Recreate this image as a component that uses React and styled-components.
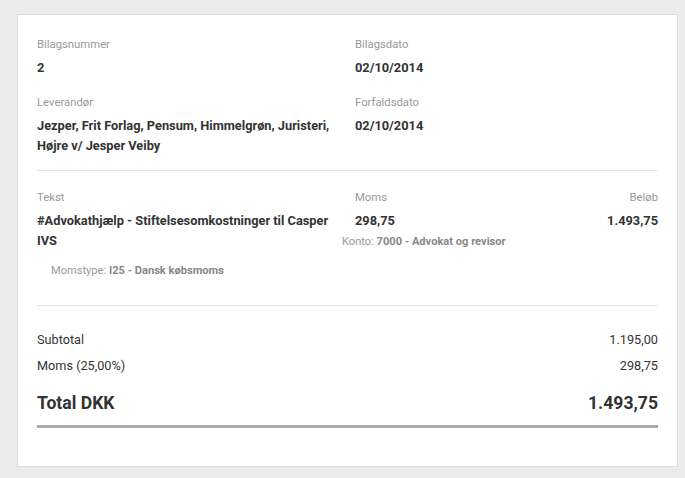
import React from "react";
import styled, { createGlobalStyle } from "styled-components";

const GlobalStyle = createGlobalStyle`
	body {
		margin: 0;
		background: #ececec;
		font-family: Roboto, "Liberation Sans", sans-serif;
		color: #333;
	}
`;

const Card = styled.div`
	box-sizing: border-box;
	width: 661px;
	height: 453px;
	margin: 14px 0 0 17px;
	padding: 22px 19px 0 19px;
	background: #fff;
	border: 1px solid #dcdcdc;
`;

const Grid = styled.div`
	display: grid;
	grid-template-columns: 304px 1fr;
	column-gap: 14px;
`;

const Field = styled.div`
	margin-top: ${(p) => p.$top || 0}px;
`;

const Label = styled.div`
	font-size: 11.3px;
	line-height: 16px;
	color: #999;
	text-align: ${(p) => (p.$right ? "right" : "left")};
`;

const Value = styled.div`
	font-size: 12.8px;
	line-height: 20px;
	font-weight: 700;
	color: #333;
	margin-top: 5px;
	text-align: ${(p) => (p.$right ? "right" : "left")};
`;

const Divider = styled.hr`
	border: 0;
	border-top: 1px solid #e6e6e6;
	margin: ${(p) => p.$top}px 0 0 0;
`;

const LineRow = styled.div`
	display: grid;
	grid-template-columns: 304px 1fr 1fr;
	column-gap: 14px;
	margin-top: 19px;
`;

const Meta = styled.div`
	font-size: 11.1px;
	line-height: 16px;
	color: #999;
	white-space: nowrap;
	margin-top: ${(p) => p.$top || 0}px;
	margin-left: ${(p) => p.$left || 0}px;

	b {
		color: #888;
		font-weight: 700;
	}
`;

const Totals = styled.div`
	margin-top: 24px;
`;

const TotalRow = styled.div`
	display: flex;
	justify-content: space-between;
	font-size: ${(p) => (p.$big ? 17.6 : 12.7)}px;
	line-height: ${(p) => (p.$big ? 24 : 20)}px;
	font-weight: ${(p) => (p.$big ? 700 : 400)};
	color: #333;
	margin-top: ${(p) => p.$top || 0}px;
`;

const TotalBar = styled.div`
	height: 3px;
	background: #aaa;
	margin-top: 10px;
`;

export default function App() {
	return (
		<>
			<GlobalStyle />
			<Card>
				<Grid>
					<Field>
						<Label>Bilagsnummer</Label>
						<Value>2</Value>
					</Field>
					<Field>
						<Label>Bilagsdato</Label>
						<Value>02/10/2014</Value>
					</Field>
					<Field $top={17}>
						<Label>Leverandør</Label>
						<Value>
							Jezper, Frit Forlag, Pensum, Himmelgrøn, Juristeri, Højre v/
							Jesper Veiby
						</Value>
					</Field>
					<Field $top={17}>
						<Label>Forfaldsdato</Label>
						<Value>02/10/2014</Value>
					</Field>
				</Grid>

				<Divider $top={14} />

				<LineRow>
					<Field>
						<Label>Tekst</Label>
						<Value>#Advokathjælp - Stiftelsesomkostninger til Casper IVS</Value>
					</Field>
					<Field>
						<Label>Moms</Label>
						<Value>298,75</Value>
						<Meta $top={3} $left={-13}>
							Konto: <b>7000 - Advokat og revisor</b>
						</Meta>
					</Field>
					<Field>
						<Label $right>Beløb</Label>
						<Value $right>1.493,75</Value>
					</Field>
				</LineRow>
				<Meta $top={12} $left={14}>
					Momstype: <b>I25 - Dansk købsmoms</b>
				</Meta>

				<Divider $top={26} />

				<Totals>
					<TotalRow>
						<span>Subtotal</span>
						<span>1.195,00</span>
					</TotalRow>
					<TotalRow $top={6}>
						<span>Moms (25,00%)</span>
						<span>298,75</span>
					</TotalRow>
					<TotalRow $big $top={15}>
						<span>Total DKK</span>
						<span>1.493,75</span>
					</TotalRow>
					<TotalBar />
				</Totals>
			</Card>
		</>
	);
}
